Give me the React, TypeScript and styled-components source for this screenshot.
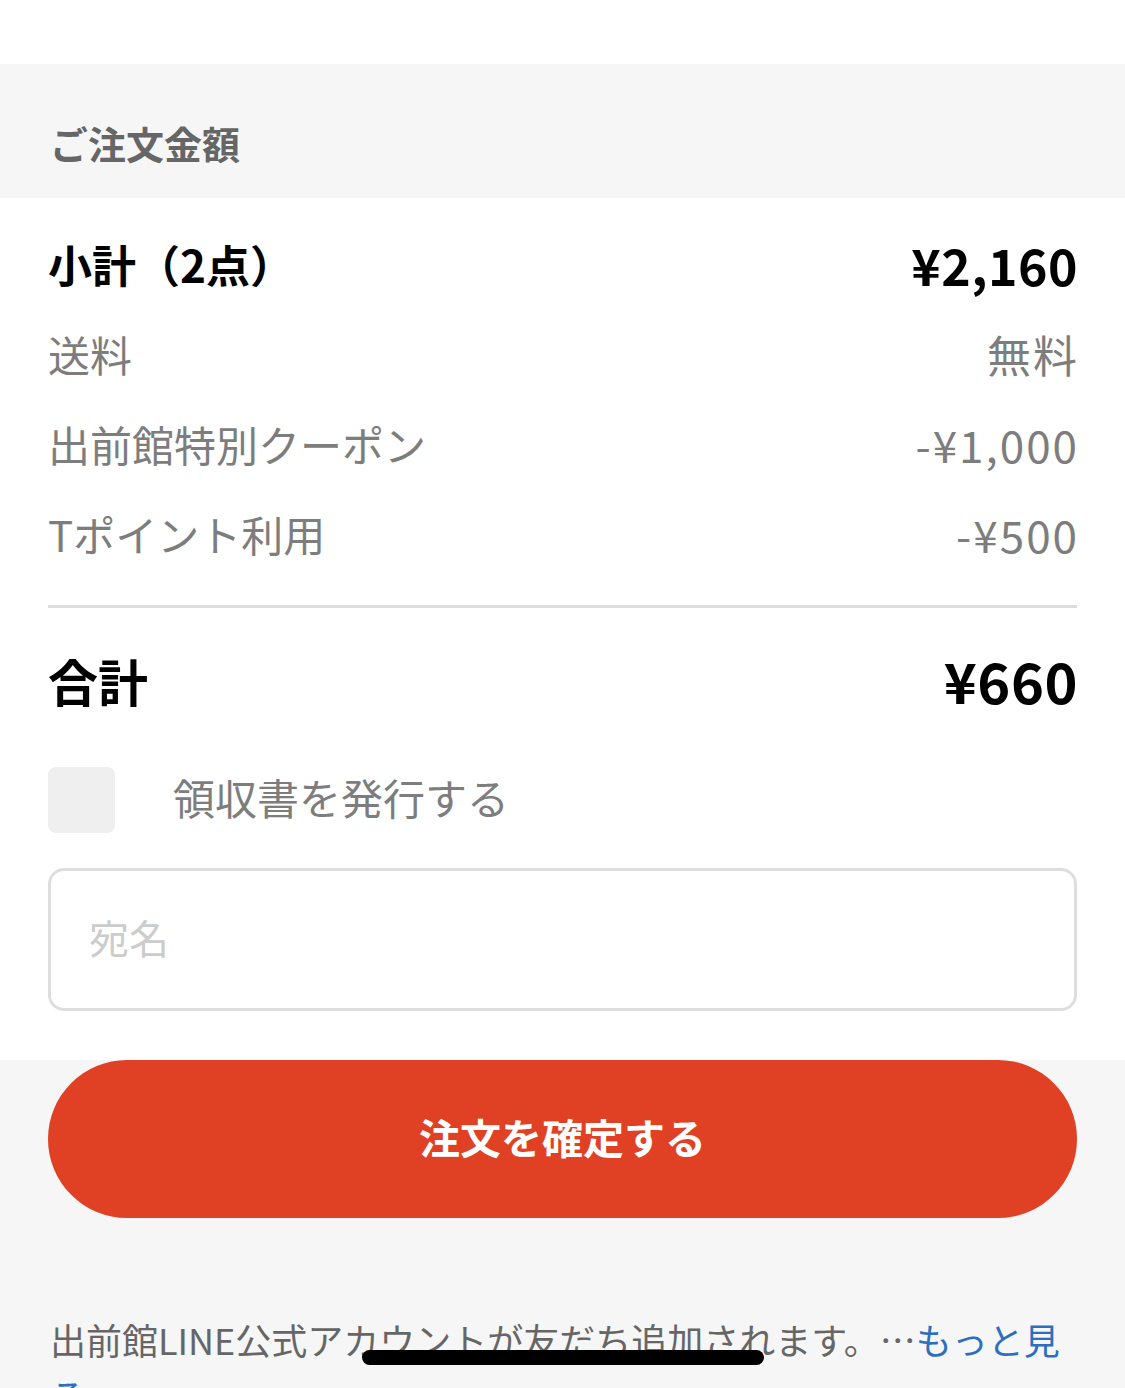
import React from "react";
import styled, { createGlobalStyle } from "styled-components";

const Global = createGlobalStyle`
  html, body { margin: 0; padding: 0; background: #f6f6f6; }
  body { font-family: "Noto Sans CJK JP", "Noto Sans", sans-serif; -webkit-font-smoothing: antialiased; }
  * { box-sizing: border-box; }
`;

const Page = styled.div`
  position: relative;
  width: 1125px;
  height: 1388px;
  overflow: hidden;
  background: #f6f6f6;
  display: flex;
  flex-direction: column;
`;

const TopSpacer = styled.div`
  height: 64px;
  background: #ffffff;
  flex-shrink: 0;
`;

const SectionHeader = styled.div`
  height: 134px;
  flex-shrink: 0;
  display: flex;
  align-items: center;
  padding: 24px 50px 0;
  font-size: 38px;
  font-weight: 700;
  color: #666666;
  line-height: 1;
`;

const Card = styled.div`
  background: #ffffff;
  padding: 24px 48px 49px;
  display: flex;
  flex-direction: column;
  flex-shrink: 0;
`;

const Row = styled.div<{ $h: number }>`
  height: ${(p) => p.$h}px;
  display: flex;
  align-items: center;
  justify-content: space-between;
`;

const Label = styled.span<{ $size: number; $strong?: boolean }>`
  font-size: ${(p) => p.$size}px;
  font-weight: ${(p) => (p.$strong ? 700 : 400)};
  color: ${(p) => (p.$strong ? "#000000" : "#7d7d7d")};
  line-height: 1;
  margin-bottom: 7px;
`;

const Amount = styled.span<{ $size: number; $strong?: boolean }>`
  font-size: ${(p) => p.$size}px;
  font-weight: ${(p) => (p.$strong ? 700 : 400)};
  color: ${(p) => (p.$strong ? "#000000" : "#7d7d7d")};
  letter-spacing: ${(p) => (p.$strong ? "0.5px" : "2px")};
  line-height: 1;
  margin-bottom: 7px;
  margin-right: ${(p) => (p.$strong ? "-1px" : "-2px")};
`;

const Divider = styled.div`
  height: 3px;
  background: #dddddd;
  margin-top: 23px;
`;

const CheckRow = styled.label`
  margin-top: 9px;
  height: 66px;
  display: flex;
  align-items: center;
  gap: 58px;
`;

const CheckBox = styled.span`
  width: 67px;
  height: 66px;
  border-radius: 8px;
  background: #efefef;
  flex-shrink: 0;
`;

const CheckText = styled.span`
  font-size: 42px;
  color: #7d7d7d;
  line-height: 1;
  margin-bottom: 6px;
`;

const NameInput = styled.input`
  margin-top: 35px;
  height: 143px;
  width: 100%;
  border: 3px solid #dedede;
  border-radius: 16px;
  padding: 0 38px 6px;
  font-family: inherit;
  font-size: 40px;
  color: #333;
  background: #ffffff;
  outline: none;
  &::placeholder { color: #cccccc; }
`;

const Bottom = styled.div`
  padding: 0 48px;
  display: flex;
  flex-direction: column;
`;

const ConfirmButton = styled.button`
  height: 158px;
  width: 100%;
  border: none;
  border-radius: 79px;
  background: #e04124;
  color: #ffffff;
  font-family: inherit;
  font-size: 41px;
  font-weight: 700;
  padding: 0 0 6px;
  cursor: pointer;
`;

const Notice = styled.p`
  margin: 93px 0 0 2px;
  font-size: 36px;
  line-height: 56px;
  color: #666666;
  white-space: nowrap;
`;

const More = styled.span`
  color: #2c6fbf;
`;

const HomeIndicator = styled.div`
  position: absolute;
  left: 362px;
  top: 1350px;
  width: 402px;
  height: 15px;
  border-radius: 8px;
  background: #000000;
`;

const rows = [
  { label: "送料", value: "無料" },
  { label: "出前館特別クーポン", value: "-¥1,000" },
  { label: "Tポイント利用", value: "-¥500" },
];

export default function App() {
  return (
    <Page>
      <Global />
      <TopSpacer />
      <SectionHeader>ご注文金額</SectionHeader>
      <Card>
        <Row $h={90}>
          <Label $size={44} $strong>小計（2点）</Label>
          <Amount $size={50} $strong>¥2,160</Amount>
        </Row>
        {rows.map((r) => (
          <Row key={r.label} $h={90}>
            <Label $size={42}>{r.label}</Label>
            <Amount $size={44}>{r.value}</Amount>
          </Row>
        ))}
        <Divider />
        <Row $h={150}>
          <Label $size={50} $strong>合計</Label>
          <Amount $size={56} $strong>¥660</Amount>
        </Row>
        <CheckRow>
          <CheckBox />
          <CheckText>領収書を発行する</CheckText>
        </CheckRow>
        <NameInput placeholder="宛名" />
      </Card>
      <Bottom>
        <ConfirmButton>注文を確定する</ConfirmButton>
        <Notice>
          出前館LINE公式アカウントが友だち追加されます。…<More>もっと見</More>
          <br />
          <More>る</More>
        </Notice>
      </Bottom>
      <HomeIndicator />
    </Page>
  );
}
